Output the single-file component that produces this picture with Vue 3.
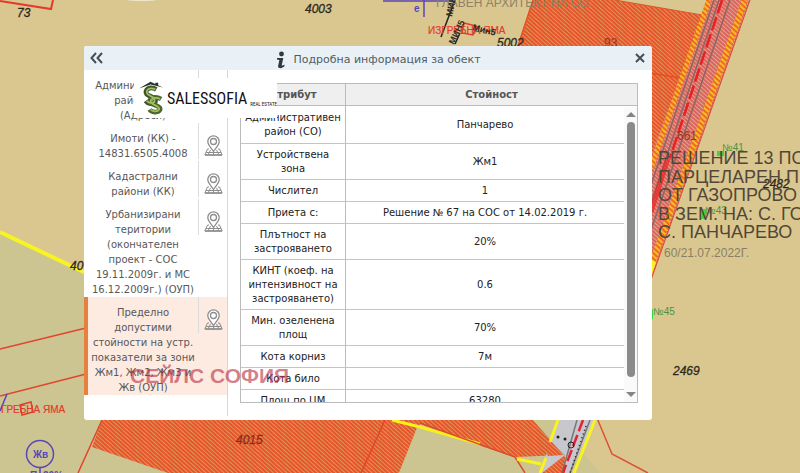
<script setup>
import { ref } from 'vue'

const layers = [
  'Административен\nрайон (СО)\n(Адреси)',
  'Имоти (КК) -\n14831.6505.4008',
  'Кадастрални\nрайони (КК)',
  'Урбанизирани\nтеритории\n(окончателен\nпроект - СОС\n19.11.2009г. и МС\n16.12.2009г.) (ОУП)',
  'Пределно\nдопустими\nстойности на устр.\nпоказатели за зони\nЖм1, Жм2, Жм3 и\nЖв (ОУП)',
]
const active = ref(4)

const rows = [
  ['Административен район (СО)', 'Панчарево'],
  ['Устройствена зона', 'Жм1'],
  ['Числител', '1'],
  ['Приета с:', 'Решение № 67 на СОС от 14.02.2019 г.'],
  ['Плътност на застрояването', '20%'],
  ['КИНТ (коеф. на интензивност на застрояването)', '0.6'],
  ['Мин. озеленена площ', '70%'],
  ['Кота корниз', '7м'],
  ['Кота било', ''],
  ['Площ по ЦМ', '63280'],
]
</script>

<template>
  <div class="page">
    <svg class="map" viewBox="0 0 800 473" preserveAspectRatio="xMinYMin slice" aria-hidden="true">
      <defs>
        <pattern id="hatch" width="3" height="3" patternUnits="userSpaceOnUse" patternTransform="rotate(-48)">
          <rect width="3" height="3" fill="#dc965c" />
          <rect width="2" height="3" fill="#e8532a" />
        </pattern>
        <pattern id="hatchPink" width="3" height="3" patternUnits="userSpaceOnUse" patternTransform="rotate(-48)">
          <rect width="3" height="3" fill="#dfa398" />
          <rect width="2" height="3" fill="#dd6459" />
        </pattern>
        <pattern id="hatchYellow" width="4" height="4" patternUnits="userSpaceOnUse" patternTransform="rotate(-48)">
          <rect width="4" height="4" fill="#f6bd22" />
          <rect width="2" height="4" fill="#ee6a28" />
        </pattern>
      </defs>
      <rect width="800" height="473" fill="#dac78f" />
      <path d="M0 232L84 272L340 400H540L600 473H0Z" fill="#ccc592" />
      <path d="M0 232L90 275" stroke="#f9f421" stroke-width="4" />
      <path d="M0 1L51 9L53 0" fill="none" stroke="#e8382a" stroke-width="2" />
      <path d="M0 349L90 327M0 396L90 373" fill="none" stroke="#e2452d" stroke-width="1.5" />
      <ellipse cx="142" cy="0" rx="14" ry="1" fill="#efe6c8" />

      <path d="M533 0H615L702 15L707 0H722L660 180H518V46Z" fill="url(#hatch)" />
      <path d="M615 0L702 15L707 0" fill="#dac78f" stroke="#d9532a" />
      <path d="M533 0L518 46M650 73L681 78L658 150" fill="none" stroke="#e5501f" stroke-width="1.5" />
      <path d="M709 0H750L651 280V155Z" fill="url(#hatchPink)" />
      <path d="M709 0L651 168" stroke="url(#hatchYellow)" stroke-width="5" />
      <path d="M745 0L648 275" stroke="url(#hatchYellow)" stroke-width="6" />
      <path d="M750 0L651 280" stroke="#df4a2d" stroke-width="1" />
      <path d="M714 0L651 185M719 0L651 203M730 0L651 230" stroke="#8b6764" stroke-width="1.5" />
      <path d="M722 0L670 158" stroke="#e81f25" stroke-width="2.5" stroke-dasharray="14 4" />
      <path d="M668 158L651 212" stroke="#e22" stroke-width="5" opacity=".7" />
      <path d="M651 260L656 262L651 277Z" fill="#f9f421" />

      <path d="M102 420H420L399 473H168L92 447Z" fill="url(#hatch)" />
      <path d="M102 420L78 473M385 420L361 473" stroke="#e5432a" stroke-width="1.5" />
      <path d="M390 418H531L564 455L515 457Z" fill="url(#hatch)" />
      <path d="M420 424L515 458L525 473H399Z" fill="#ccc592" />
      <path d="M515 458L565 455L545 473H524Z" fill="#ccc592" />
      <path d="M392 420L420 427L480 444" fill="none" stroke="#f7f01d" stroke-width="3" />
      <path d="M420 423L515 457L525 473" fill="none" stroke="#dd4b28" stroke-width="1.5" />
      <path d="M558 420L540 473H570L595 420Z" fill="#c7c7cd" />
      <path d="M531 420L564 455L548 456Z" fill="url(#hatch)" />
      <path d="M565 455L542 473H565Z" fill="url(#hatch)" />
      <path d="M558 420L550 442M546 458L540 473M517 459L541 464M595 420L574 473" stroke="#f9f420" stroke-width="3" />
      <path d="M577 420L562 473M590 420L570 473" stroke="#777" stroke-width="1.5" />
      <path d="M583 420L563 473" stroke="#df2538" stroke-width="2.5" stroke-dasharray="12 4" />
      <path d="M586 426L570 473" stroke="#222" stroke-width="1.5" stroke-dasharray="1 3" />
      <g fill="#222"><circle cx="558" cy="437" r="1.5" /><circle cx="565" cy="439" r="1.5" /></g>
      <circle cx="571" cy="445" r="3" fill="none" stroke="#222" />
      <path d="M597 418L612 454L648 473" fill="none" stroke="#dc5235" stroke-width="1.5" />

      <g stroke="#5946b8" stroke-width="1.5" fill="none">
        <path d="M383 1H454M424 0V17M7 394L0 411M40 468V473" />
        <circle cx="40" cy="454" r="13.5" />
      </g>
      <path d="M455 0L441 37M460 33L455 44" stroke="#222" stroke-width="1.5" />
      <path d="M464 23L476 26L473 35L462 33ZM20 405L31 402L33 412L22 415Z" fill="none" stroke="#e33b2d" stroke-width="1.5" />

      <g class="parcel">
        <text x="17" y="17">73</text><text x="305" y="13">4003</text><text x="497" y="47">5002</text>
        <text x="70" y="270">40</text><text x="673" y="375">2469</text><text x="763" y="188">2482</text>
        <text class="dim" x="236" y="444">4015</text>
      </g>
      <text class="faded" x="436" y="7">ГЛАВЕН АРХИТЕКТ НА СО</text>
      <g class="red"><text x="428" y="34">ИЗГРЕБНА ЯМА</text><text x="1" y="413">ГРЕБНА ЯМА</text></g>
      <g class="mini"><text transform="translate(452 17) rotate(-78)">МИН</text><text transform="translate(454 45) rotate(-65)">МИН5</text><text transform="translate(472 30) rotate(14)">Мин5</text></g>
      <text class="blue" x="414" y="12">е</text><text class="blue" x="33" y="458">Жв</text>
      <text class="blue" x="30" y="479">П=20%</text>
      <g class="brown"><text x="604" y="47">93</text><text x="677" y="140">661</text></g>
      <g fill="#42d538"><rect x="717" y="151" width="7" height="5" /><rect x="700" y="209" width="6" height="10" /><rect x="651" y="309" width="2" height="10" /></g>
      <g class="green"><text x="722" y="151">№41</text><text x="705" y="214">№43</text><text x="653" y="315">№45</text></g>
      <g class="decision">
        <text x="658" y="164">РЕШЕНИЕ 13 ПО</text><text x="658" y="183">ПАРЦЕЛАРЕН П</text>
        <text x="658" y="201">ОТ ГАЗОПРОВО</text><text x="658" y="220">В ЗЕМ. НА: С. ГО</text>
        <text x="658" y="238">С. ПАНЧАРЕВО</text>
      </g>
      <text class="date" x="664" y="257">60/21.07.2022Г.</text>
    </svg>

    <section class="panel" aria-label="Подробна информация за обект">
      <header class="bar">
        <button class="tool" type="button" aria-label="Свий">
          <svg width="13" height="12" viewBox="0 0 13 12"><path d="M6 1L1.500 6L6 11M12 1L7.500 6L12 11" /></svg>
        </button>
        <h1 class="title">
          <svg width="10" height="18" viewBox="0 0 10 18" fill="#303940"><circle cx="5.500" cy="3" r="2.400" /><path d="M1 7H7.300L5.800 14C5.700 15 7 14.500 8.500 13.500V15C7 16.700 5 17.500 3.300 17C1.800 16.600 2 15.500 2.300 14L3.400 9L1 8.500Z" /></svg>
          Подробна информация за обект
        </h1>
        <button class="tool" type="button" aria-label="Затвори">
          <svg width="12" height="12" viewBox="0 0 12 12"><path d="M2 2L10 10M10 2L2 10" /></svg>
        </button>
      </header>

      <div class="content">
        <nav class="layers">
          <div v-for="(name, i) in layers" :key="i" class="layer" :class="{ active: i === active }">
            <button class="name" type="button" @click="active = i">{{ name }}</button>
            <button class="locate" type="button" aria-label="Покажи на картата">
              <svg width="19" height="21" viewBox="0 0 19 21" fill="none" stroke="#8d8d8d">
                <path d="M5 14H3.500L.8 20H18.200L15.500 14H14M2 17.500H17M6.500 15L4 20M12.500 15L15 20M9.500 17V20" />
                <path d="M9.500 16.500C8 13.500 3.800 10.500 3.800 6.500A5.700 5.700 0 0 1 15.200 6.500C15.200 10.500 11 13.500 9.500 16.500Z" fill="#fff" stroke-width="1.300" />
                <circle cx="9.500" cy="6.500" r="3" stroke-width="1.300" />
                <path d="M1 20H18" stroke-width="1.500" />
              </svg>
            </button>
          </div>
        </nav>

        <div class="details">
          <div class="frame">
            <table class="grid">
              <thead><tr><th scope="col">Атрибут</th><th scope="col">Стойност</th></tr></thead>
              <tbody>
                <tr v-for="row in rows" :key="row[0]"><td>{{ row[0] }}</td><td>{{ row[1] }}</td></tr>
              </tbody>
            </table>
            <div class="scrollbar" aria-hidden="true">
              <i class="arrow up"></i><i class="thumb"></i><i class="arrow down"></i>
            </div>
          </div>
        </div>
      </div>

      <div class="logo">
        <svg width="26" height="34" viewBox="0 0 26 34" fill="none">
          <path d="M0 7L12 0L25 6L12 3Z" fill="#26352b" />
          <path d="M17 1H20V4L17 3Z" fill="#26352b" />
          <path d="M18 8C11 4 5 9 8 13C11 16 19 16 17 21C15 24 9 23 7 20" stroke="#40542b" stroke-width="5" />
          <path d="M23 18C16 14 9 18 12 22C15 25 23 25 22 29C20 33 13 32 11 29" stroke="#4a682e" stroke-width="5" />
          <path d="M17 8C11 5 6 9 9 13C11 15 18 16 16 21C14 23 10 22 8 20M22 18C16 15 10 19 13 22C15 25 22 25 21 29C19 32 14 31 12 29" stroke="#a3bd62" stroke-width="1.800" />
        </svg>
        <span class="brand">SALESSOFIA</span><span class="tagline">REAL ESTATE</span>
      </div>
      <div class="watermark">СЕЙЛС СОФИЯ</div>
    </section>
  </div>
</template>

<style>
body { margin: 0; }
</style>

<style scoped>
* { box-sizing: border-box; }
.page {
  position: relative;
  min-height: 100vh;
  padding: 46px 148px 53px 84px;
  overflow: hidden;
  font-family: "DejaVu Sans", sans-serif;
}
.map { position: absolute; inset: 0; width: 100%; height: 100%; font-family: "Liberation Sans", sans-serif; }
.parcel { font-size: 12px; font-style: italic; fill: #2c271c; stroke: #2c271c; stroke-width: .3; }
.dim { fill: #8d2d18; stroke: #8d2d18; }
.faded { font-size: 12px; fill: #8e8268; }
.red { font-size: 10px; fill: #e33b2d; stroke: #e33b2d; stroke-width: .2; }
.mini { font-size: 9px; font-weight: bold; fill: #302c24; }
.blue { font-size: 10px; font-weight: bold; fill: #5946b8; }
.brown { font-size: 12px; fill: #9b3420; }
.green { font-size: 10px; fill: #4b9140; }
.decision { font-size: 18px; fill: #514739; }
.date { font-size: 12px; fill: #8a7f66; }

button { padding: 0; border: 0; background: none; font: inherit; color: inherit; cursor: pointer; }
.panel { position: relative; background: #fff; border-radius: 3px; overflow: hidden; }
.bar {
  display: flex;
  align-items: center;
  justify-content: space-between;
  height: 24px;
  padding: 0 6px;
  background: #e9f1f6;
}
.tool { display: flex; }
.tool svg { fill: none; stroke: #444e56; stroke-width: 2; }
.title {
  display: flex;
  align-items: center;
  gap: 7px;
  margin: 4px 0 0;
  padding-left: 20px;
  font-size: 11px;
  font-weight: normal;
  line-height: 18px;
  color: #525c64;
}
.content { display: flex; padding-bottom: 4px; }
.layers { flex: 0 0 144px; border-right: 1px solid #d6d6d6; }
.layer { display: flex; align-items: flex-start; border-left: 4px solid transparent; }
.active { background: #fdeae0; border-left-color: #e5803f; }
.layers .name {
  flex: 1;
  padding-top: 8px;
  font-size: 10px;
  line-height: 15px;
  color: #585858;
  text-align: center;
  white-space: pre;
}
.layers .locate { display: flex; flex: 0 0 29px; justify-content: center; height: 36px; padding-top: 12px; border-left: 1px solid #dcdcdc; }
.details { flex: 1; padding: 13px 14px 13px 12px; }
.frame { position: relative; border: 1px solid #bbb; }
.grid { display: block; font-size: 10px; line-height: 14px; color: #222; text-align: center; }
thead, tbody { display: block; }
tbody { height: 296px; overflow: hidden; padding-right: 13px; }
tr { display: grid; grid-template-columns: 105px 1fr; }
th { padding: 4px 4px 3px; background: #efefef; border-bottom: 1px solid #bbb; color: #555; }
td { display: flex; align-items: center; justify-content: center; padding: 4px 4px 3px; border-bottom: 1px solid #c4c4c4; }
tbody tr:first-child td { padding-top: 5px; padding-bottom: 4px; }
th:first-child, td:first-child { border-right: 1px solid #bbb; }
.scrollbar {
  position: absolute;
  inset: 23px 0 0 auto;
  display: flex;
  flex-direction: column;
  align-items: center;
  gap: 5px;
  width: 13px;
  padding: 5px 0;
  background: #fafafa;
}
.arrow { border: 5px solid transparent; }
.up { border-top: 0; border-bottom-color: #858585; }
.down { border-bottom: 0; border-top-color: #858585; }
.thumb { flex: 1; width: 8px; margin-bottom: 10px; border-radius: 4px; background: #8b8b8b; }
.logo {
  position: absolute;
  left: 50px;
  top: 32px;
  display: flex;
  align-items: center;
  gap: 3px;
  height: 40px;
  width: 143px;
  padding-left: 5px;
  background: #fff;
  color: #111;
}
.brand { font-family: "Liberation Sans Narrow", "Roboto Condensed", "Liberation Sans", sans-serif; font-size: 16px; }
.tagline { padding-top: 12px; font-family: "Liberation Sans Narrow", "Roboto Condensed", sans-serif; font-size: 5px; white-space: nowrap; }
.watermark {
  position: absolute;
  left: 46px;
  top: 319px;
  font: bold 21px/22px "Liberation Sans", sans-serif;
  color: rgba(184, 43, 65, .6);
  pointer-events: none;
}
</style>
